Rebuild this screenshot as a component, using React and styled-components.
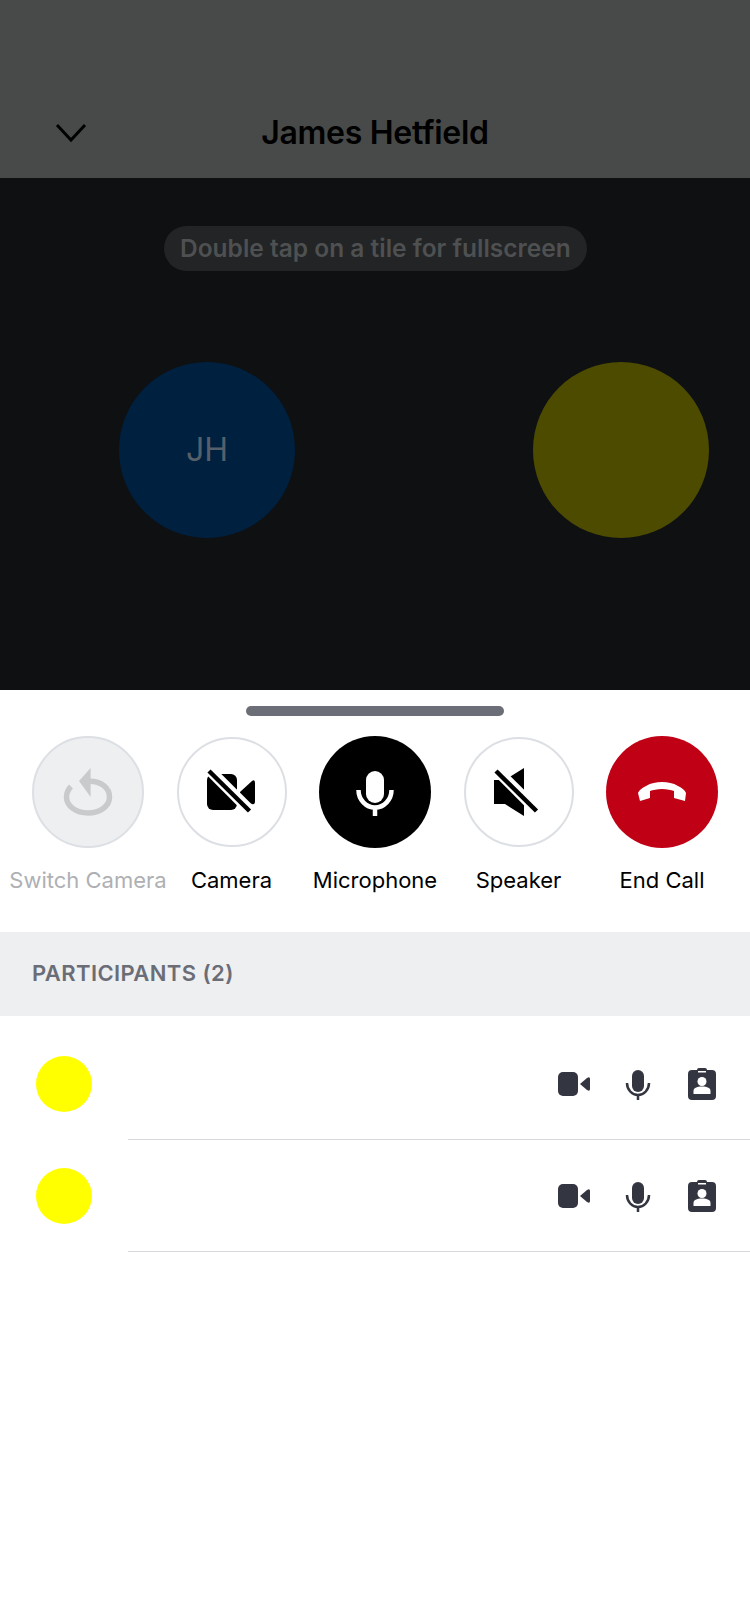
// App.jsx
import React from "react";
import styled, { createGlobalStyle } from "styled-components";

const GlobalStyle = createGlobalStyle`
  html, body {
    margin: 0;
    padding: 0;
    background: #ffffff;
    font-family: Inter, "Liberation Sans", sans-serif;
  }
`;

const Page = styled.div`
  width: 750px;
  height: 1624px;
  display: flex;
  flex-direction: column;
  overflow: hidden;
  background: #ffffff;
`;

const Header = styled.header`
  height: 178px;
  flex: none;
  box-sizing: border-box;
  padding-top: 108px;
  display: grid;
  grid-template-columns: 141px 1fr 141px;
  align-items: start;
  background: #484a49;
`;

const BackButton = styled.div`
  display: flex;
  justify-content: center;
  padding-top: 15px;
`;

const Title = styled.h1`
  margin: 0;
  font-size: 32px;
  line-height: 50px;
  font-weight: 600;
  letter-spacing: -0.3px;
  text-align: center;
  color: #000000;
`;

const Stage = styled.section`
  position: relative;
  height: 512px;
  flex: none;
  box-sizing: border-box;
  padding-top: 32px;
  display: flex;
  align-items: center;
  overflow: hidden;
  background: #0e1012;
`;

const Hint = styled.div`
  position: absolute;
  top: 48px;
  left: 164px;
  height: 45px;
  box-sizing: border-box;
  padding: 0 16px 2px;
  display: flex;
  align-items: center;
  border-radius: 23px;
  background: #222425;
  color: #4e5051;
  font-size: 24.5px;
  font-weight: 600;
  white-space: nowrap;
`;

const Tile = styled.div`
  flex: 0 0 414px;
  display: flex;
  justify-content: center;
`;

const Avatar = styled.div`
  width: 176px;
  height: 176px;
  box-sizing: border-box;
  padding-bottom: 2px;
  border-radius: 50%;
  display: flex;
  align-items: center;
  justify-content: center;
  background: ${(props) => props.color};
  color: #56606a;
  font-size: 32px;
`;

const Sheet = styled.section`
  flex: 1;
  display: flex;
  flex-direction: column;
  background: #ffffff;
`;

const Handle = styled.div`
  width: 258px;
  height: 10px;
  margin: 16px auto 20px;
  border-radius: 5px;
  background: #6b6e76;
`;

const Controls = styled.div`
  display: grid;
  grid-template-columns: repeat(5, 143.5px);
  justify-content: center;
  height: 196px;
`;

const Control = styled.div`
  display: flex;
  flex-direction: column;
  align-items: center;
  gap: 14px;
`;

const RoundButton = styled.div`
  width: ${(props) => props.size}px;
  height: ${(props) => props.size}px;
  margin: ${(props) => (112 - props.size) / 2}px;
  box-sizing: border-box;
  border-radius: 50%;
  display: flex;
  align-items: center;
  justify-content: center;
  border: ${(props) => (props.border ? "2px solid #dcdfe3" : "none")};
  background: ${(props) => props.bg};
`;

const ControlLabel = styled.span`
  font-size: 22px;
  line-height: 36px;
  white-space: nowrap;
  color: ${(props) => (props.disabled ? "#aeb0b4" : "#000000")};
`;

const SectionTitle = styled.div`
  height: 84px;
  flex: none;
  box-sizing: border-box;
  padding: 0 0 2px 32px;
  display: flex;
  align-items: center;
  background: #eeeff1;
  color: #6a6d76;
  font-size: 22px;
  font-weight: 600;
  letter-spacing: 0.4px;
`;

const List = styled.div`
  padding-top: 12px;
`;

const Row = styled.div`
  height: 112px;
  display: flex;
  align-items: center;
`;

const Dot = styled.div`
  flex: 0 0 128px;
  display: flex;
  justify-content: center;

  &::before {
    content: "";
    width: 56px;
    height: 56px;
    border-radius: 50%;
    background: #ffff00;
  }
`;

const RowBody = styled.div`
  flex: 1;
  height: 100%;
  box-sizing: border-box;
  padding-right: 16px;
  display: flex;
  align-items: center;
  justify-content: flex-end;
  border-bottom: 1px solid #d8d9dc;
`;

const RowIcon = styled.div`
  width: 64px;
  display: flex;
  justify-content: center;
`;

const ChevronIcon = () => (
  <svg width="32" height="20" viewBox="0 0 32 20" fill="none" stroke="#000" strokeWidth="3">
    <path d="M2 2l14 15L30 2" />
  </svg>
);

const SwitchCameraIcon = () => (
  <svg width="56" height="56" viewBox="0 0 56 56">
    <path
      d="M30 17.2c11 0 19.500 6.600 19.500 15.800S40 49 28 49 6.500 42 6.500 33c0-4 1.500-7.500 4.500-10.500"
      fill="none"
      stroke="#c9cacc"
      strokeWidth="5.500"
    />
    <path d="M30.600 4v29L19 17z" fill="#c9cacc" />
  </svg>
);

const Slash = ({ bg = "#fff" }) => (
  <>
    <path d="M3 3.500l44 44" stroke={bg} strokeWidth="11" />
    <path d="M5 7l40.500 40" stroke="#000" strokeWidth="4.500" />
  </>
);

const CameraOffIcon = () => (
  <svg width="56" height="56" viewBox="0 0 56 56">
    <rect x="3" y="10" width="30" height="36" rx="6" />
    <path d="M36 28l12-11q3-2 3 2v18q0 4-3 3l-3-1-9-9z" />
    <Slash />
  </svg>
);

const MicIcon = () => (
  <svg width="56" height="56" viewBox="0 0 56 56" fill="none" stroke="#fff">
    <rect x="19" y="7" width="18" height="32" rx="9" fill="#fff" stroke="none" />
    <path d="M11.500 26a16.500 17.500 0 0 0 33 0" strokeWidth="4.500" />
    <path d="M28 43v9" strokeWidth="4.500" />
  </svg>
);

const SpeakerOffIcon = () => (
  <svg width="56" height="56" viewBox="0 0 56 56">
    <path d="M3 16h11L33 4v48L14 40H3z" />
    <Slash />
  </svg>
);

const HangUpIcon = () => (
  <svg width="56" height="56" viewBox="0 0 56 56">
    <path
      d="M4 29c1-3 4-5 8-7 5-3 10-4 16-4s11 1 16 4c4 2 7 4 8 7l-1 8-11-3v-7c-3-1-7-2-12-2s-9 1-12 2v7L6 37z"
      fill="#fff"
    />
  </svg>
);

const SmallCameraIcon = () => (
  <svg width="40" height="40" viewBox="0 0 40 40" fill="#333640">
    <rect x="4" y="8" width="20" height="24" rx="5" />
    <path d="M26 20l7-6q3-2 3 1v10q0 3-3 1z" />
  </svg>
);

const SmallMicIcon = () => (
  <svg width="40" height="40" viewBox="0 0 40 40" fill="none" stroke="#333640" strokeWidth="2.500">
    <rect x="14" y="6" width="12" height="22" rx="6" fill="#333640" stroke="none" />
    <path d="M9 19a11 12 0 0 0 22 0" />
    <path d="M20 31v5" />
  </svg>
);

const BadgeIcon = () => (
  <svg width="40" height="40" viewBox="0 0 40 40">
    <rect x="6" y="6" width="28" height="30" rx="4" fill="#333640" />
    <rect x="15" y="4" width="10" height="5" rx="2" fill="#333640" />
    <rect x="16" y="7" width="8" height="1.500" fill="#fff" />
    <circle cx="20" cy="17.500" r="4.500" fill="#fff" />
    <path d="M11.500 30v-3c0-3 3-4.500 8.500-4.500s8.500 1.500 8.500 4.500v3z" fill="#fff" />
  </svg>
);

const controls = [
  { label: "Switch Camera", bg: "#eeeff1", size: 112, border: true, disabled: true, icon: <SwitchCameraIcon /> },
  { label: "Camera", bg: "#ffffff", size: 110, border: true, icon: <CameraOffIcon /> },
  { label: "Microphone", bg: "#000000", size: 112, icon: <MicIcon /> },
  { label: "Speaker", bg: "#ffffff", size: 110, border: true, icon: <SpeakerOffIcon /> },
  { label: "End Call", bg: "#c00014", size: 112, icon: <HangUpIcon /> },
];

const App = () => {
  return (
    <Page>
      <GlobalStyle />
      <Header>
        <BackButton>
          <ChevronIcon />
        </BackButton>
        <Title>James Hetfield</Title>
      </Header>
      <Stage>
        <Hint>Double tap on a tile for fullscreen</Hint>
        <Tile>
          <Avatar color="#002040">JH</Avatar>
        </Tile>
        <Tile>
          <Avatar color="#4d4b00" />
        </Tile>
      </Stage>
      <Sheet>
        <Handle />
        <Controls>
          {controls.map((c) => (
            <Control key={c.label}>
              <RoundButton bg={c.bg} size={c.size} border={c.border}>
                {c.icon}
              </RoundButton>
              <ControlLabel disabled={c.disabled}>{c.label}</ControlLabel>
            </Control>
          ))}
        </Controls>
        <SectionTitle>PARTICIPANTS (2)</SectionTitle>
        <List>
          {[0, 1].map((i) => (
            <Row key={i}>
              <Dot />
              <RowBody>
                <RowIcon>
                  <SmallCameraIcon />
                </RowIcon>
                <RowIcon>
                  <SmallMicIcon />
                </RowIcon>
                <RowIcon>
                  <BadgeIcon />
                </RowIcon>
              </RowBody>
            </Row>
          ))}
        </List>
      </Sheet>
    </Page>
  );
};

export default App;
